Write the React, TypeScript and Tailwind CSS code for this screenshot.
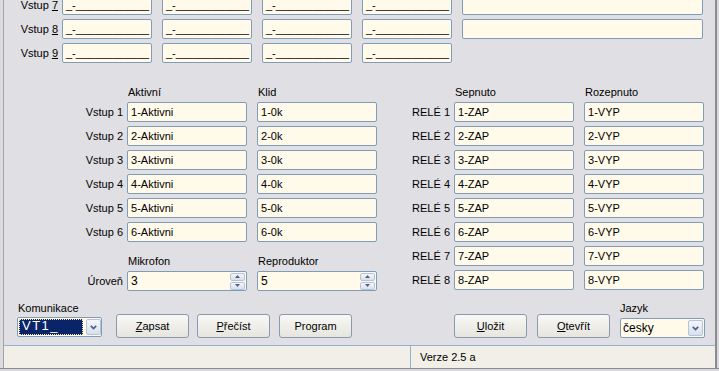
import React from "react";

const FONT = "font-['Liberation_Sans',Arial,sans-serif]";

function Box({ w, children, className = "" }: { w: string; children?: React.ReactNode; className?: string }) {
  return (
    <div
      className={`${w} h-[20px] shrink-0 border border-[#7f9db9] rounded-[2px] bg-[#fffae9] flex items-center pl-[3px] overflow-hidden whitespace-nowrap text-black ${className}`}
    >
      {children}
    </div>
  );
}

const MASK = "_-____________";

function Arrow({ dir }: { dir: "down" | "up" }) {
  return (
    <svg width="7" height="5" viewBox="0 0 7 5">
      {dir === "down" ? (
        <path d="M0.8 0.8 L3.5 3.6 L6.2 0.8" fill="none" stroke="#4d6185" strokeWidth="1.7" />
      ) : (
        <path d="M0.8 4.2 L3.5 1.4 L6.2 4.2" fill="none" stroke="#4d6185" strokeWidth="1.7" />
      )}
    </svg>
  );
}

function DropBtn() {
  return (
    <div className="w-[15px] h-[16px] shrink-0 rounded-[2px] border border-[#b4c3dc] bg-linear-to-b from-[#f4f6fa] to-[#d9e0ec] flex items-center justify-center">
      <Arrow dir="down" />
    </div>
  );
}

function SpinBtn({ dir }: { dir: "up" | "down" }) {
  return (
    <div className="w-[15px] h-[8px] rounded-[2px] border border-[#b4c3dc] bg-linear-to-b from-[#f4f6fa] to-[#d9e0ec] flex items-center justify-center">
      <svg width="5" height="3" viewBox="0 0 5 3">
        {dir === "up" ? <path d="M0 3 L2.5 0 L5 3 Z" fill="#4d6185" /> : <path d="M0 0 L2.5 3 L5 0 Z" fill="#4d6185" />}
      </svg>
    </div>
  );
}

function Btn({ children, ml }: { children: React.ReactNode; ml: string }) {
  return (
    <div
      className={`${ml} mt-[13px] w-[73px] h-[24px] shrink-0 rounded-[3px] border border-[#8a98b0] bg-linear-to-b from-[#f8f8f5] to-[#e6e5de] flex items-center justify-center text-black`}
    >
      {children}
    </div>
  );
}

function TopRow({ n, wide }: { n: number; wide: boolean }) {
  return (
    <div className="flex items-center h-[20px]">
      <div className="w-[54px] text-right leading-[14px]">
        Vstup <span className="underline">{n}</span>
      </div>
      <Box w="w-[90px] ml-[4px]">{MASK}</Box>
      <Box w="w-[90px] ml-[10px]">{MASK}</Box>
      <Box w="w-[90px] ml-[10px]">{MASK}</Box>
      <Box w="w-[90px] ml-[10px]">{MASK}</Box>
      {wide && <Box w="w-[241px] ml-[10px]"></Box>}
    </div>
  );
}

export default function App() {
  const vstupy = [1, 2, 3, 4, 5, 6];
  const rele = [1, 2, 3, 4, 5, 6, 7, 8];
  return (
    <div className={`w-[719px] h-[371px] overflow-hidden flex flex-col bg-[#d6d5da] text-[11px] ${FONT}`}>
      <div className="flex h-[368px]">
        <div className="w-[4px] h-full bg-[#dcdce0] border-r border-[#a3a3a8]" />
        <div className="w-[711px] h-full bg-[#e0dfe3] flex flex-col overflow-hidden">
          {/* top rows */}
          <div className="flex flex-col gap-[4px] mt-[-5px]">
            <TopRow n={7} wide />
            <TopRow n={8} wide />
            <TopRow n={9} wide={false} />
          </div>

          {/* middle */}
          <div className="flex mt-[22px]">
            {/* left column */}
            <div className="flex flex-col">
              <div className="flex h-[14px] leading-[14px]">
                <div className="w-[123px]" />
                <div className="w-[120px] pl-[1px]">Aktivní</div>
                <div className="w-[120px] ml-[10px] pl-[1px]">Klid</div>
              </div>
              <div className="flex flex-col gap-[4px] mt-[3px]">
                {vstupy.map((i) => (
                  <div key={i} className="flex items-center h-[20px]">
                    <div className="w-[119px] text-right">Vstup {i}</div>
                    <Box w="w-[120px] ml-[4px]">{i}-Aktivni</Box>
                    <Box w="w-[120px] ml-[10px]">{i}-0k</Box>
                  </div>
                ))}
              </div>
              <div className="flex h-[14px] leading-[14px] mt-[12px]">
                <div className="w-[123px]" />
                <div className="w-[120px] pl-[1px]">Mikrofon</div>
                <div className="w-[120px] ml-[10px] pl-[1px]">Reproduktor</div>
              </div>
              <div className="flex items-center h-[20px] mt-[3px]">
                <div className="w-[119px] text-right">Úroveň</div>
                <Box w="w-[120px] ml-[4px] pr-[1px]">
                  <span className="flex-1 text-[12px]">3</span>
                  <div className="flex flex-col gap-[1px]">
                    <SpinBtn dir="up" />
                    <SpinBtn dir="down" />
                  </div>
                </Box>
                <Box w="w-[120px] ml-[10px] pr-[1px]">
                  <span className="flex-1 text-[12px]">5</span>
                  <div className="flex flex-col gap-[1px]">
                    <SpinBtn dir="up" />
                    <SpinBtn dir="down" />
                  </div>
                </Box>
              </div>
            </div>

            {/* right column */}
            <div className="flex flex-col">
              <div className="flex h-[14px] leading-[14px]">
                <div className="w-[77px]" />
                <div className="w-[120px] pl-[1px]">Sepnuto</div>
                <div className="w-[120px] ml-[10px] pl-[1px]">Rozepnuto</div>
              </div>
              <div className="flex flex-col gap-[4px] mt-[3px]">
                {rele.map((i) => (
                  <div key={i} className="flex items-center h-[20px]">
                    <div className="w-[73px] text-right">RELÉ {i}</div>
                    <Box w="w-[120px] ml-[4px]">{i}-ZAP</Box>
                    <Box w="w-[120px] ml-[10px]">{i}-VYP</Box>
                  </div>
                ))}
              </div>
            </div>
          </div>

          {/* bottom controls */}
          <div className="flex items-start mt-[10px] h-[37px]">
            <div className="ml-[13px] flex flex-col">
              <div className="h-[14px] leading-[14px] pl-[1px]">Komunikace</div>
              <div className="mt-[2px] w-[85px] h-[20px] border border-[#7f9db9] rounded-[2px] bg-[#fffae9] flex items-center pl-[1px] pr-[0px]">
                <div className="w-[64px] h-[16px] bg-[#0a246a] outline outline-1 outline-dotted outline-[#f6e7a0] -outline-offset-1 text-white pl-[3px] leading-[14px] text-[13px] tracking-[1.5px] overflow-hidden">
                  VT1_
                </div>
                <div className="ml-[3px]">
                  <DropBtn />
                </div>
              </div>
            </div>
            <Btn ml="ml-[14px]">
              <span>
                <span className="underline">Z</span>apsat
              </span>
            </Btn>
            <Btn ml="ml-[8px]">
              <span>
                <span className="underline">P</span>řečíst
              </span>
            </Btn>
            <Btn ml="ml-[9px]">
              <span>Program</span>
            </Btn>
            <Btn ml="ml-[102px]">
              <span>
                <span className="underline">U</span>ložit
              </span>
            </Btn>
            <Btn ml="ml-[10px]">
              <span>
                <span className="underline">O</span>tevřít
              </span>
            </Btn>
            <div className="ml-[10px] flex flex-col">
              <div className="h-[14px] leading-[14px] pl-[0px]">Jazyk</div>
              <div className="mt-[3px] w-[85px] h-[20px] border border-[#7f9db9] rounded-[2px] bg-[#fffae9] flex items-center pl-[2px] pr-[1px]">
                <span className="flex-1 text-[12px]">česky</span>
                <DropBtn />
              </div>
            </div>
          </div>

          {/* status bar */}
          <div className="mt-[7px] h-[23px] border-t border-[#92b1d1] bg-[#f1efe7] flex">
            <div className="w-[407px] h-full border-r border-[#92b1d1]" />
            <div className="pl-[9px] flex items-center h-full">Verze 2.5 a</div>
          </div>
        </div>
        <div className="w-[4px] h-full bg-[#d8d8dc] border-l-2 border-[#8c8c90]" />
      </div>
      <div className="h-[3px] border-t border-[#8c8c90] bg-[#d8d8dc]" />
    </div>
  );
}
